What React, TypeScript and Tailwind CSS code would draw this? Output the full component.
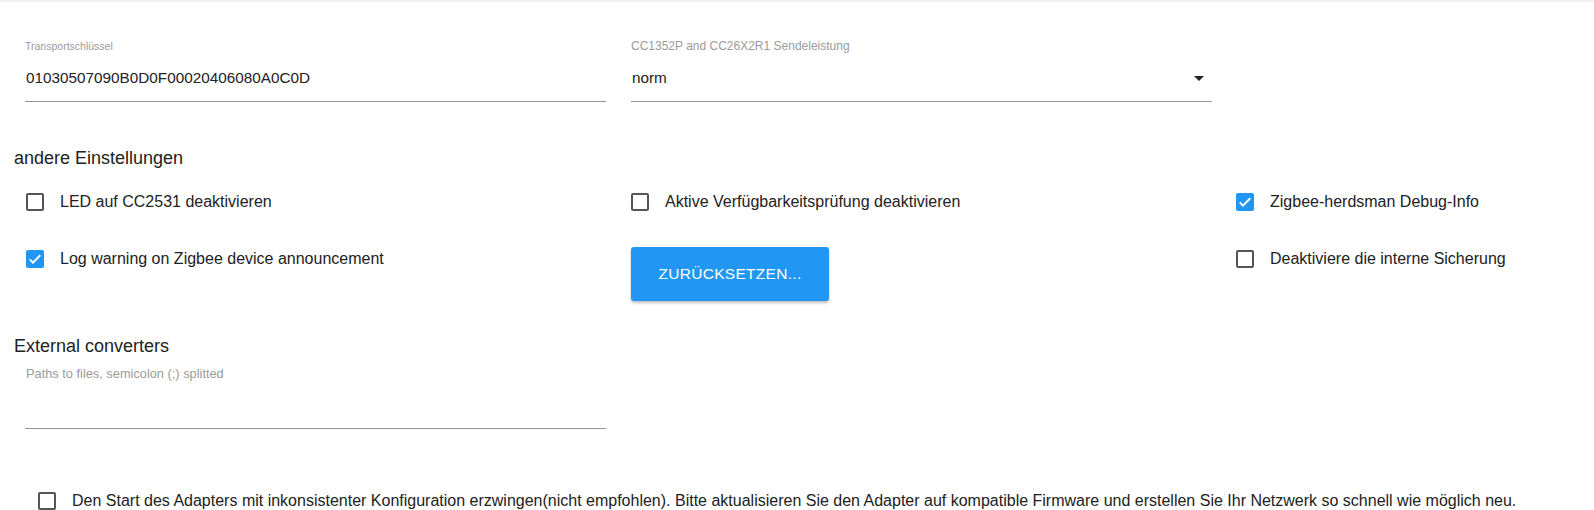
import { useState } from 'react';

type Opt = { id: string; label: string; checked: boolean };

function Box({ checked, onClick }: { checked: boolean; onClick: () => void }) {
  return (
    <button
      onClick={onClick}
      className={
        checked
          ? 'w-[18px] h-[18px] rounded-[2px] bg-[#2196f3] flex items-center justify-center shrink-0'
          : 'w-[18px] h-[18px] rounded-[2px] border-2 border-[#555] bg-white shrink-0'
      }
    >
      {checked && (
        <svg width="18" height="18" viewBox="0 0 24 24">
          <path d="M5 12.5l4.3 4.3L19 7" fill="none" stroke="white" strokeWidth="2.6" />
        </svg>
      )}
    </button>
  );
}

function Field({ label, value, small, select }: { label: string; value: string; small?: boolean; select?: boolean }) {
  return (
    <div className="w-[581px] border-b border-[#949494]">
      <div className={small ? 'h-[14px] text-[10.5px] leading-[14px] text-[#9b9b9b]' : 'h-[14px] text-[12px] leading-[14px] text-[#9b9b9b]'}>
        {label}
      </div>
      <div className="mt-[15px] mb-[13px] h-[20px] flex items-center justify-between text-[15.3px] text-[#222]">
        <span className="pl-[1px]">{value}</span>
        {select && (
          <svg width="10" height="5" viewBox="0 0 10 5" className="mr-[8px]">
            <path d="M0 0h10L5 5z" fill="#222" />
          </svg>
        )}
      </div>
    </div>
  );
}

export default function App() {
  const [opts, setOpts] = useState<Opt[]>([
    { id: 'led', label: 'LED auf CC2531 deaktivieren', checked: false },
    { id: 'ping', label: 'Aktive Verfügbarkeitsprüfung deaktivieren', checked: false },
    { id: 'debug', label: 'Zigbee-herdsman Debug-Info', checked: true },
    { id: 'warn', label: 'Log warning on Zigbee device announcement', checked: true },
    { id: 'reset', label: '', checked: false },
    { id: 'backup', label: 'Deaktiviere die interne Sicherung', checked: false },
  ]);
  const [force, setForce] = useState(false);

  const toggle = (id: string) =>
    setOpts(opts.map(o => (o.id === id ? { ...o, checked: !o.checked } : o)));

  return (
    <div className="w-[1594px] h-[510px] overflow-hidden bg-white font-['Liberation_Sans',Arial,sans-serif] text-[#222] border-t border-[#efefef] shadow-[inset_0_2px_2px_-1px_rgba(0,0,0,0.06)]">
      {/* Felder oben */}
      <div className="flex gap-[25px] pl-[25px] pt-[38px]">
        <Field label="Transportschlüssel" value="01030507090B0D0F00020406080A0C0D" small />
        <Field label="CC1352P and CC26X2R1 Sendeleistung" value="norm" select />
      </div>

      <div className="pl-[14px] mt-[45px] h-[22px] leading-[22px] text-[18px]">andere Einstellungen</div>

      <div className="grid grid-cols-[605px_605px_1fr] pl-[26px] mt-[4px]">
        {opts.map(o =>
          o.id === 'reset' ? (
            <div key={o.id} className="pt-[17px]">
              <button className="w-[198px] h-[54px] rounded-[3px] bg-[#2196f3] text-white text-[15.5px] font-medium tracking-[0.3px] uppercase shadow-[0_2px_3px_rgba(0,0,0,0.25)]">
                Zurücksetzen...
              </button>
            </div>
          ) : (
            <div key={o.id} className="h-[57px] flex items-center gap-[16px] text-[16px]">
              <Box checked={o.checked} onClick={() => toggle(o.id)} />
              <span>{o.label}</span>
            </div>
          )
        )}
      </div>

      <div className="pl-[14px] mt-[34px] h-[22px] leading-[22px] text-[18px]">External converters</div>
      <div className="pl-[26px] mt-[9px] text-[12.8px] leading-[16px] text-[#9b9b9b]">Paths to files, semicolon (;) splitted</div>
      <div className="ml-[25px] w-[581px] h-[47px] border-b border-[#949494]"></div>

      <div className="flex items-center h-[20px] gap-[16px] pl-[38px] mt-[62px] text-[16px]">
        <Box checked={force} onClick={() => setForce(!force)} />
        <span className="whitespace-nowrap">
          Den Start des Adapters mit inkonsistenter Konfiguration erzwingen(nicht empfohlen). Bitte aktualisieren Sie den Adapter auf kompatible Firmware und erstellen Sie Ihr Netzwerk so schnell wie möglich neu.
        </span>
      </div>
    </div>
  );
}
